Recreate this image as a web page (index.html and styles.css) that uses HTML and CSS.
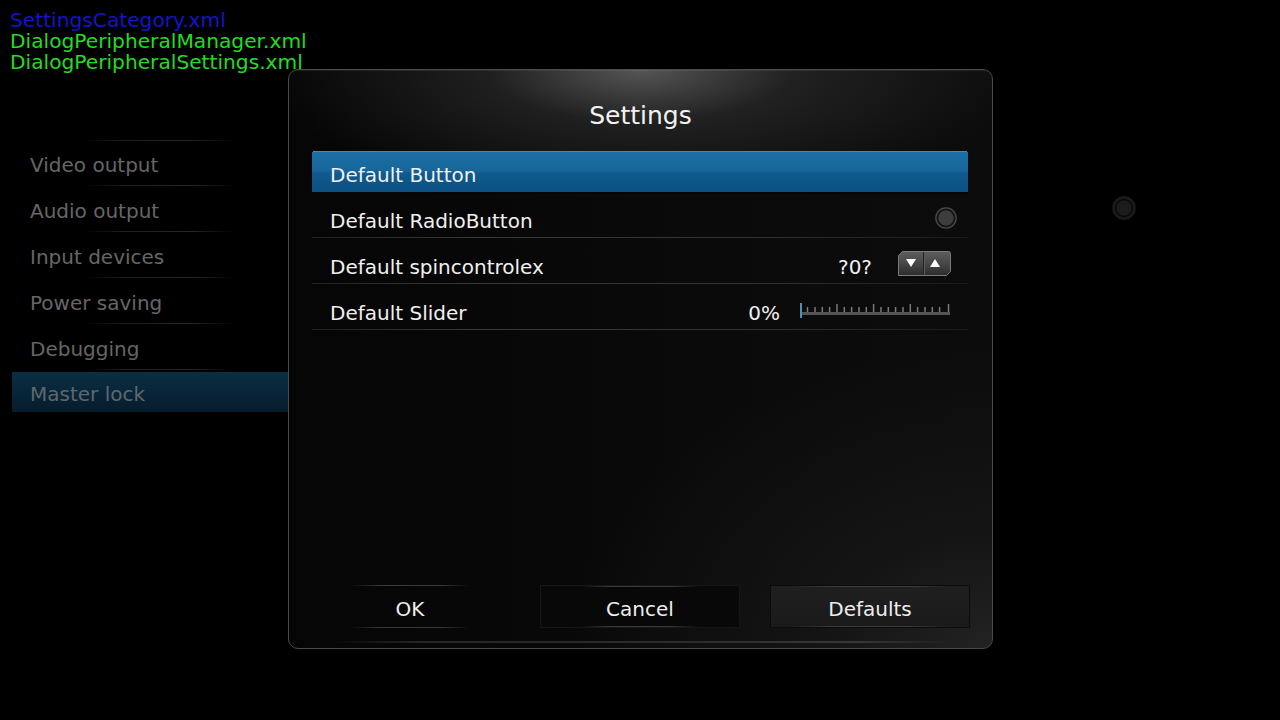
FILE: index.html
```html
<!DOCTYPE html>
<html>
<head>
<meta charset="utf-8">
<title>Settings</title>
<link rel="stylesheet" href="styles.css">
</head>
<body>
<div class="page">
  <nav class="sidebar">
    <div class="cat">Video output</div>
    <div class="cat">Audio output</div>
    <div class="cat">Input devices</div>
    <div class="cat">Power saving</div>
    <div class="cat">Debugging</div>
    <div class="cat cat-active">Master lock</div>
  </nav>
  <main class="content">
    <div class="bg-row"></div>
    <div class="bg-row"><span class="bg-radio"></span></div>
  </main>
</div>

<div class="debug">
  <div class="debug-blue">SettingsCategory.xml</div>
  <div class="debug-green">DialogPeripheralManager.xml</div>
  <div class="debug-green">DialogPeripheralSettings.xml</div>
</div>

<section class="dialog">
  <h1 class="dialog-title">Settings</h1>
  <div class="list">
    <div class="row row-focus"><span class="label">Default Button</span></div>
    <div class="row"><span class="label">Default RadioButton</span><span class="radio"></span></div>
    <div class="row">
      <span class="label">Default spincontrolex</span>
      <span class="value spin-value">?0?</span>
      <svg class="spin" width="53" height="25" viewBox="0 0 53 25">
        <defs>
          <linearGradient id="sg" x1="0" y1="0" x2="0" y2="1">
            <stop offset="0" stop-color="#5e5e5e"/>
            <stop offset="0.5" stop-color="#474747"/>
            <stop offset="1" stop-color="#2c2c2c"/>
          </linearGradient>
        </defs>
        <path d="M4.5 0.5 H50.5 Q52.5 0.5 52.5 2.5 V20.5 L48.5 24.5 H0.5 V4.5 Z" fill="url(#sg)" stroke="#7a7a7a"/>
        <line x1="25.5" y1="1" x2="25.5" y2="24" stroke="#232323"/>
        <line x1="26.5" y1="1" x2="26.5" y2="24" stroke="#5a5a5a"/>
        <path d="M8 8 H18 L13 16 Z" fill="#ffffff"/>
        <path d="M32 16 H42 L37 8 Z" fill="#ffffff"/>
      </svg>
    </div>
    <div class="row">
      <span class="label">Default Slider</span>
      <span class="value slider-value">0%</span>
      <svg class="slider" width="150" height="17" viewBox="0 0 150 17">
        <rect x="0" y="10" width="150" height="3" fill="#555"/>
        <g stroke="#7a7a7a" stroke-width="1.5">
          <line x1="7.5" y1="5" x2="7.5" y2="10"/>
          <line x1="15" y1="5" x2="15" y2="10"/>
          <line x1="22.3" y1="5" x2="22.3" y2="10"/>
          <line x1="29.6" y1="5" x2="29.6" y2="10"/>
          <line x1="37" y1="2" x2="37" y2="10"/>
          <line x1="44.3" y1="5" x2="44.3" y2="10"/>
          <line x1="51.6" y1="5" x2="51.6" y2="10"/>
          <line x1="59" y1="5" x2="59" y2="10"/>
          <line x1="66.3" y1="5" x2="66.3" y2="10"/>
          <line x1="73.6" y1="2" x2="73.6" y2="10"/>
          <line x1="81" y1="5" x2="81" y2="10"/>
          <line x1="88.3" y1="5" x2="88.3" y2="10"/>
          <line x1="95.6" y1="5" x2="95.6" y2="10"/>
          <line x1="103" y1="5" x2="103" y2="10"/>
          <line x1="110.3" y1="2" x2="110.3" y2="10"/>
          <line x1="117.6" y1="5" x2="117.6" y2="10"/>
          <line x1="125" y1="5" x2="125" y2="10"/>
          <line x1="132.3" y1="5" x2="132.3" y2="10"/>
          <line x1="139.6" y1="5" x2="139.6" y2="10"/>
          <line x1="148.5" y1="2" x2="148.5" y2="10"/>
        </g>
        <rect x="0" y="1" width="2" height="15" fill="#4f8fb8"/>
      </svg>
    </div>
  </div>
  <div class="spacer"></div>
  <div class="buttons">
    <div class="btn btn-plain">OK</div>
    <div class="btn btn-dim">Cancel</div>
    <div class="btn btn-box">Defaults</div>
  </div>
  <div class="bottom-line"></div>
</section>
</body>
</html>
```

FILE: styles.css
```css
* { box-sizing: border-box; }

html, body {
  margin: 0;
  padding: 0;
}

body {
  width: 1280px;
  height: 720px;
  overflow: hidden;
  background: #000;
  font-family: "DejaVu Sans", "Noto Sans", sans-serif;
  position: relative;
}

/* ---------- background page ---------- */
.page {
  display: flex;
  padding-top: 140px;
  height: 720px;
}

.sidebar {
  width: 276px;
  margin-left: 12px;
  display: flex;
  flex-direction: column;
  background: linear-gradient(to right, transparent 73px, #202020 110px, #242424 180px, transparent 223px) top / 100% 1px no-repeat;
}

.cat {
  height: 46px;
  display: flex;
  align-items: center;
  padding-left: 18px;
  padding-top: 3px;
  font-size: 20px;
  color: #666;
  background: linear-gradient(to right, transparent 73px, #1e1e1e 110px, #262626 180px, transparent 223px) bottom / 100% 1px no-repeat;
}

.cat-active {
  margin-top: 2px;
  height: 40px;
  padding-top: 4px;
  background: linear-gradient(to bottom, #0b2e44, #082436 60%, #061c2b);
  color: #5e676c;
}

.content {
  flex: 1;
  display: flex;
  flex-direction: column;
  padding-right: 144px;
}

.bg-row {
  height: 46px;
  display: flex;
  align-items: center;
  justify-content: flex-end;
}

.bg-radio {
  width: 24px;
  height: 24px;
  border-radius: 50%;
  margin-top: -2px;
  background: radial-gradient(circle, #1c1c1c 0 7px, #0a0a0a 8px 9px, #202020 10px, #111 12px);
}

/* ---------- debug overlay ---------- */
.debug {
  position: absolute;
  top: 10px;
  left: 10px;
  font-size: 20.2px;
  line-height: 21px;
  z-index: 5;
}

.debug-blue { color: #1414c8; }
.debug-green { color: #22dd22; }

/* ---------- dialog ---------- */
.dialog {
  position: absolute;
  left: 288px;
  top: 69px;
  width: 705px;
  height: 580px;
  border: 1px solid #4a4a4a;
  border-radius: 10px;
  display: flex;
  flex-direction: column;
  background:
    radial-gradient(ellipse 380px 130px at 50% 0, rgba(110,110,110,0.75), rgba(60,60,60,0.45) 40%, rgba(0,0,0,0) 100%),
    radial-gradient(ellipse 420px 300px at 100% 100%, #222 0, #141414 40%, rgba(0,0,0,0) 100%),
    linear-gradient(to right, #050505, #0a0a0a 60%, #0c0c0c);
  box-shadow: inset 0 6px 0 -5px rgba(255,255,255,0.08);
}

.dialog-title {
  margin: 0;
  padding-top: 31px;
  height: 82px;
  text-align: center;
  font-size: 25px;
  line-height: 30px;
  font-weight: normal;
  color: #f2f2f2;
}

.list {
  margin: 0 24px 0 23px;
  display: flex;
  flex-direction: column;
  gap: 6px;
}

.row {
  height: 40px;
  display: flex;
  align-items: center;
  padding: 5px 18px 0 18px;
  font-size: 20px;
  color: #f0f0f0;
  background: linear-gradient(to right, #222 0, #3a3a3a 25%, #303030 70%, #1a1a1a 100%) bottom / 100% 1px no-repeat;
}

.row-focus {
  background: linear-gradient(to bottom, #1b6ea3 0, #17679c 45%, #0f5a8c 55%, #0b5083 100%);
  box-shadow: 0 -2px 0 -1px #7a7a7a, 0 2px 0 0 #050505;
}

.label { flex: 1; }

.value { color: #f0f0f0; }

.radio {
  width: 22px;
  height: 22px;
  margin-right: -7px;
  margin-top: -6px;
  border-radius: 50%;
  background: radial-gradient(circle, #3d3d3d 0 7px, #151515 8px 9px, #505050 10px, #2a2a2a 11px);
}

.spin-value { margin-right: 26px; }
.spin { display: block; margin-top: -7px; margin-right: -1px; }

.slider-value { margin-right: 20px; }
.slider { display: block; margin-top: -4px; }

.spacer { flex: 1; }

.buttons {
  display: flex;
  gap: 30px;
  padding-left: 21px;
  height: 43px;
}

.btn {
  width: 200px;
  height: 43px;
  display: flex;
  align-items: center;
  justify-content: center;
  font-size: 20px;
  color: #eee;
  padding-top: 4px;
  background:
    linear-gradient(to right, transparent 20%, #3a3a3a 35%, #3a3a3a 65%, transparent 80%) top / 100% 1px no-repeat,
    linear-gradient(to right, transparent 20%, #3a3a3a 35%, #3a3a3a 65%, transparent 80%) bottom / 100% 1px no-repeat;
}

.btn-dim {
  border: 1px solid #161616;
  background:
    linear-gradient(to right, transparent 20%, #3a3a3a 35%, #3a3a3a 65%, transparent 80%) top / 100% 1px no-repeat,
    linear-gradient(to right, transparent 20%, #3a3a3a 35%, #3a3a3a 65%, transparent 80%) bottom / 100% 1px no-repeat,
    #080808;
}

.btn-box {
  border: 1px solid #0b0b0b;
  background:
    linear-gradient(to right, transparent 10%, #3c3c3c 30%, #3c3c3c 70%, transparent 90%) top / 100% 1px no-repeat,
    linear-gradient(to right, transparent 10%, #3c3c3c 30%, #3c3c3c 70%, transparent 90%) bottom / 100% 1px no-repeat,
    linear-gradient(#1f1f1f, #1a1a1a);
}

.bottom-line {
  margin: 13px 40px 5px 40px;
  height: 2px;
  background: linear-gradient(to right, transparent, #262626 15%, #2c2c2c 60%, #383838 85%, transparent);
}
```
